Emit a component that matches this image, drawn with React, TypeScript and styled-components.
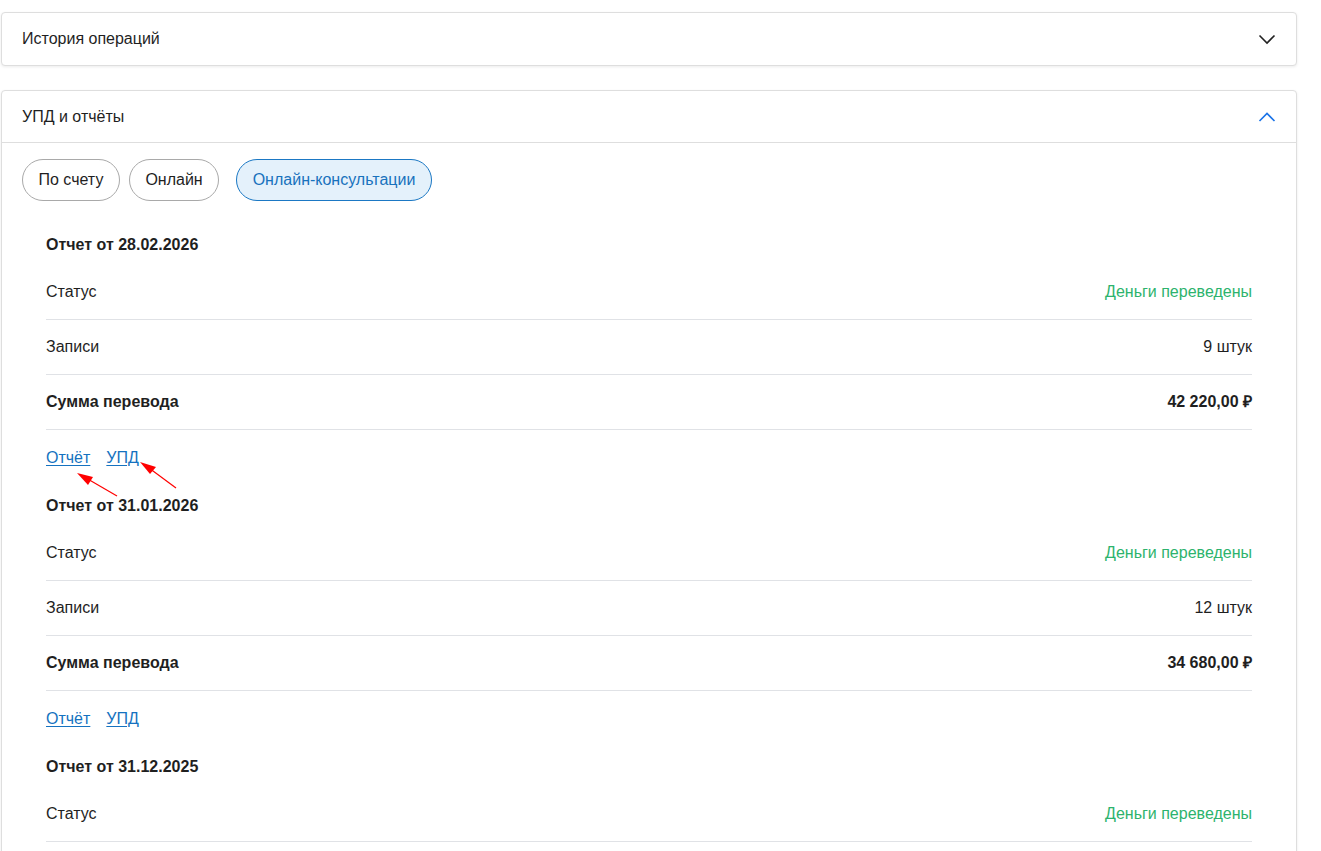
import React from "react";
import styled, { createGlobalStyle } from "styled-components";

const Global = createGlobalStyle`
  html, body { margin: 0; padding: 0; background: #fff; }
  body { font-family: "Liberation Sans", Arial, sans-serif; color: #1f1f1f; }
`;

const Page = styled.div`
  width: 1296px;
  margin-left: 1px;
  padding-top: 12px;
  display: flex;
  flex-direction: column;
  gap: 24px;
  position: relative;
`;

const Card = styled.section`
  border: 1px solid #dedede;
  border-radius: 4px;
  background: #fff;
  box-shadow: 0 1px 3px rgba(0, 0, 0, 0.08);
`;

const CardHeader = styled.div<{ $open?: boolean }>`
  height: ${(p) => (p.$open ? 51 : 52)}px;
  display: flex;
  align-items: center;
  justify-content: space-between;
  padding: 0 19px 0 20px;
  font-size: 16px;
  line-height: 20px;
  border-bottom: ${(p) => (p.$open ? "1px solid #dedede" : "none")};
`;

const Chevron = styled.svg<{ $color: string }>`
  width: 20px;
  height: 20px;
  stroke: ${(p) => p.$color};
  fill: none;
  stroke-width: 1.6;
`;

const Body = styled.div`
  padding: 16px 44px 40px 20px;
`;

const Chips = styled.div`
  display: flex;
  gap: 9px;
  margin-bottom: 34px;
`;

const Chip = styled.button<{ $active?: boolean }>`
  height: 42px;
  padding: 0 15.5px;
  border-radius: 21px;
  font-family: inherit;
  font-size: 16px;
  border: 1px solid ${(p) => (p.$active ? "#1b78c4" : "#a9a9a9")};
  background: ${(p) => (p.$active ? "#e4f1fb" : "#fff")};
  color: ${(p) => (p.$active ? "#1872bd" : "#1f1f1f")};
  margin-left: ${(p) => (p.$active ? "8px" : "0")};
  cursor: pointer;
`;

const Reports = styled.div`
  padding-left: 24px;
  display: flex;
  flex-direction: column;
  gap: 28px;
`;

const Report = styled.div``;

const ReportTitle = styled.div`
  font-weight: 700;
  font-size: 16px;
  line-height: 20px;
  margin-bottom: 10px;
`;

const Row = styled.div<{ $bold?: boolean }>`
  display: flex;
  justify-content: space-between;
  align-items: center;
  padding: 17px 0;
  line-height: 20px;
  font-size: 16px;
  font-weight: ${(p) => (p.$bold ? 700 : 400)};
  border-bottom: 1px solid #e0e2e6;
`;

const Value = styled.span<{ $green?: boolean }>`
  color: ${(p) => (p.$green ? "#2db36d" : "inherit")};
`;

const Links = styled.div`
  display: flex;
  gap: 16px;
  margin-top: 18px;
  line-height: 20px;
  font-size: 16px;
`;

const Link = styled.a`
  color: #1572c0;
  text-decoration: underline;
  text-underline-offset: 2px;
`;

const Arrows = styled.svg`
  position: absolute;
  left: -1px;
  top: 0;
  width: 300px;
  height: 520px;
  pointer-events: none;
`;

type R = { date: string; count: string; sum: string };
const reports: R[] = [
  { date: "28.02.2026", count: "9 штук", sum: "42 220,00 ₽" },
  { date: "31.01.2026", count: "12 штук", sum: "34 680,00 ₽" },
  { date: "31.12.2025", count: "15 штук", sum: "51 300,00 ₽" },
];

export default function App() {
  return (
    <>
      <Global />
      <Page>
        <Card>
          <CardHeader>
            <span>История операций</span>
            <Chevron viewBox="0 0 20 20" $color="#222">
              <path d="M2.5 6.5 L10 14 L17.5 6.5" />
            </Chevron>
          </CardHeader>
        </Card>
        <Card>
          <CardHeader $open>
            <span>УПД и отчёты</span>
            <Chevron viewBox="0 0 20 20" $color="#1a73e8">
              <path d="M2.5 14 L10 6.5 L17.5 14" />
            </Chevron>
          </CardHeader>
          <Body>
            <Chips>
              <Chip>По счету</Chip>
              <Chip>Онлайн</Chip>
              <Chip $active>Онлайн-консультации</Chip>
            </Chips>
            <Reports>
              {reports.map((r) => (
                <Report key={r.date}>
                  <ReportTitle>Отчет от {r.date}</ReportTitle>
                  <Row>
                    <span>Статус</span>
                    <Value $green>Деньги переведены</Value>
                  </Row>
                  <Row>
                    <span>Записи</span>
                    <Value>{r.count}</Value>
                  </Row>
                  <Row $bold>
                    <span>Сумма перевода</span>
                    <Value>{r.sum}</Value>
                  </Row>
                  <Links>
                    <Link href="#">Отчёт</Link>
                    <Link href="#">УПД</Link>
                  </Links>
                </Report>
              ))}
            </Reports>
          </Body>
        </Card>
        <Arrows viewBox="0 0 300 520">
          <g stroke="#ff0000" strokeWidth="1.2" fill="#ff0000">
            <line x1="117" y1="496" x2="86" y2="478" />
            <polygon points="77,473 93,477 88,485" stroke="none" />
            <line x1="176" y1="488" x2="149" y2="468" />
            <polygon points="140,462 156,467 150,474" stroke="none" />
          </g>
        </Arrows>
      </Page>
    </>
  );
}
